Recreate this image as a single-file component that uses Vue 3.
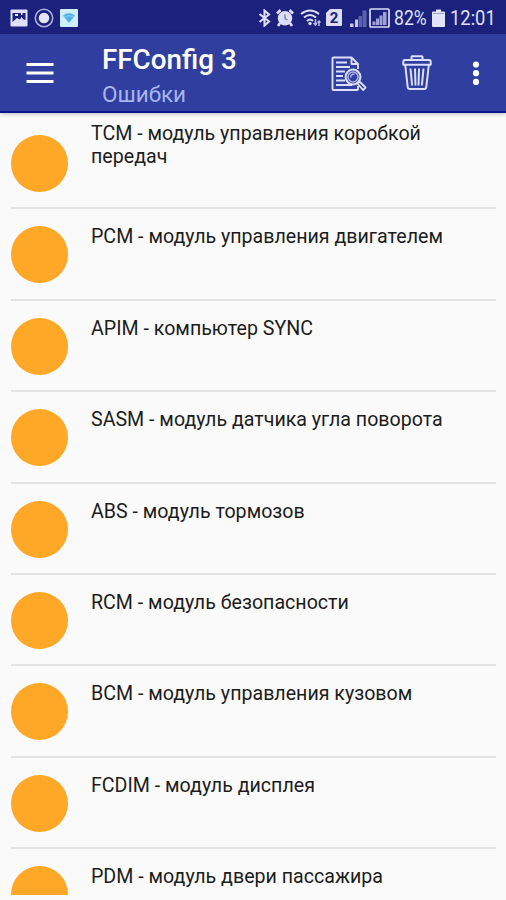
<script setup>
import { ref } from 'vue'

const modules = ref([
  { code: 'TCM', name: 'TCM - модуль управления коробкой передач' },
  { code: 'PCM', name: 'PCM - модуль управления двигателем' },
  { code: 'APIM', name: 'APIM - компьютер SYNC' },
  { code: 'SASM', name: 'SASM - модуль датчика угла поворота' },
  { code: 'ABS', name: 'ABS - модуль тормозов' },
  { code: 'RCM', name: 'RCM - модуль безопасности' },
  { code: 'BCM', name: 'BCM - модуль управления кузовом' },
  { code: 'FCDIM', name: 'FCDIM - модуль дисплея' },
  { code: 'PDM', name: 'PDM - модуль двери пассажира' },
])
</script>

<template>
  <div class="screen">
    <div class="status-bar">
      <div class="status-left">
        <svg width="18" height="18" viewBox="0 0 18 18">
          <rect x="0.5" y="0.5" width="17" height="17" rx="1" fill="#dfe1f7" />
          <path d="M2.500 4h13v7l-2-.5-2-2.500-1.500 2.500-3-1.500-4.500 4z" fill="#1b217c" />
          <path d="M5 5h3v2H5zM11 4h1.500v2H11z" fill="#dfe1f7" />
        </svg>
        <svg width="20" height="20" viewBox="0 0 20 20">
          <circle cx="10" cy="10" r="8.7" fill="none" stroke="#a9acdc" stroke-width="1.6" />
          <circle cx="10" cy="10" r="5.3" fill="#e4e6fb" />
        </svg>
        <svg width="18" height="18" viewBox="0 0 18 18">
          <rect width="18" height="18" rx="1" fill="#cdeefb" />
          <path d="M3 6.5Q9 1.5 15 6.5L9 14z" fill="#54b1e8" />
          <path d="M4.5 8Q9 5 13.5 8" fill="none" stroke="#8bcdf0" />
        </svg>
      </div>
      <div class="status-right">
        <svg width="13" height="18" viewBox="0 0 13 18">
          <path d="M1.500 5L11 12.500 6.500 16.500V1.500L11 5.500 1.500 13" fill="none" stroke="#dcdef6" stroke-width="2.100" />
        </svg>
        <svg class="alarm" width="18" height="18" viewBox="0 0 18 18">
          <circle cx="9" cy="9.3" r="7.2" fill="#dcdef6" />
          <path d="M1 4.500l3.500-3.500M17 4.500l-3.500-3.500M4 14l-2 3M14 14l2 3" stroke="#dcdef6" stroke-width="2.600" />
          <path d="M9 5.500v4l2.500 1.500" fill="none" stroke="#777bb9" stroke-width="1.400" />
        </svg>
        <svg class="wifi" width="22" height="18" viewBox="0 0 22 18">
          <g fill="none" stroke="#dcdef6" stroke-width="2.100">
            <path d="M1 5Q10-2 19 5" />
            <path d="M4 8.500Q10 3.500 16 8.500" />
            <path d="M7 12Q10 9 13 12" />
          </g>
          <circle cx="10" cy="14.500" r="1.700" fill="#dcdef6" />
          <path d="M15.500 10v6M13.500 14l2 2 1.500-2M19 17v-5M17.500 13.500l1.500-1.500 1.500 1.500" fill="none" stroke="#b9bce4" stroke-width="1.500" />
        </svg>
        <span class="sim">2</span>
        <svg class="signal" width="18" height="18" viewBox="0 0 18 18">
          <path d="M1 14.500h3.500V18H1zM6 10.500h3V18H6z" fill="#c4c7ea" />
          <path d="M9.500 7H13v11H9.500zM13.500 1.500H17.500V18h-4z" fill="#5d62ad" />
        </svg>
        <svg class="signal-boxed" width="21" height="20" viewBox="0 0 21 20">
          <rect x="1" y="1" width="19" height="18" rx="1" fill="none" stroke="#dcdef6" stroke-width="1.700" />
          <path d="M3.500 13.500h3V17h-3zM7 10.500h3V17H7zM10.500 7.500h3V17h-3zM14 4h3.500v13H14z" fill="#9da1d3" />
        </svg>
        <span class="percent">82%</span>
        <svg class="battery" width="13" height="18" viewBox="0 0 13 18">
          <path d="M4 0.500h5v2h3a1 1 0 0 1 1 1V17a1 1 0 0 1-1 1H1a1 1 0 0 1-1-1V3.500a1 1 0 0 1 1-1h3z" fill="#e1e3f9" />
          <path d="M1 4.500h11" stroke="#9da1cf" />
        </svg>
        <span class="clock">12:01</span>
      </div>
    </div>

    <header class="app-bar">
      <svg class="menu" width="28" height="22" viewBox="0 0 28 22" aria-label="Меню">
        <path d="M0.500 2.600h27M0.500 11h27M0.500 19.400h27" stroke="#fff" stroke-width="3" />
      </svg>
      <div class="titles">
        <h1>FFConfig 3</h1>
        <p>Ошибки</p>
      </div>
      <svg class="search" width="36" height="36" viewBox="0 0 36 36">
        <g fill="none" stroke="#dce0fb" stroke-width="1.900" stroke-linejoin="round">
          <path d="M27 13V8l-6.500-6.500h-18q-1 0-1 1V33q0 1 1 1H26q1 0 1-1v-3" />
          <path d="M20.500 2v6H27" />
          <path d="M5 6.500h11M5 11h14M5 15.500h9M5 20h7M5 24.500h9M5 29h16" />
          <circle cx="22" cy="21" r="7.400" fill="#303f9f" stroke-width="2" />
          <circle cx="22" cy="21" r="5" stroke="#a9b3e6" stroke-width="1.600" />
          <path d="M19.500 21.500q.5-3.500 4-3.500" stroke="#a9b3e6" stroke-width="1.500" />
          <path d="M26.500 27.500l2-2 6 6-2.500 2.500z" fill="#303f9f" stroke-width="1.800" />
        </g>
      </svg>
      <svg class="trash" width="30" height="36" viewBox="0 0 30 36">
        <g fill="none" stroke="#dce0fb" stroke-width="2" stroke-linejoin="round">
          <path d="M9.500 5V2q0-.8.800-.8h9.400q.8 0 .8.800v3" />
          <path d="M3 5h24q1.700 0 1.700 2v2.800H1.300V7q0-2 1.700-2z" />
          <path d="M3.200 10l2.500 22q.2 2 2 2h14.600q1.800 0 2-2l2.500-22" />
          <path d="M8.500 13.500l1.600 17M13 13.500l.5 17M17 13.500l-.5 17M21.500 13.500l-1.600 17" />
        </g>
      </svg>
      <svg class="more" width="8" height="26" viewBox="0 0 8 26">
        <g fill="#fff">
          <circle cx="4" cy="4.500" r="3.100" />
          <circle cx="4" cy="13.200" r="3.100" />
          <circle cx="4" cy="21.900" r="3.100" />
        </g>
      </svg>
    </header>

    <main class="content">
      <ul class="list">
        <li v-for="item in modules" :key="item.code" class="row">
          <span class="dot"></span>
          <span class="name">{{ item.name }}</span>
        </li>
      </ul>
    </main>
  </div>
</template>

<style>
body {
  margin: 0;
  background: #fafafa;
}
</style>

<style scoped>
.screen {
  width: 506px;
  height: 900px;
  display: flex;
  flex-direction: column;
  overflow: hidden;
  background: #fafafa;
  font-family: Roboto, 'Liberation Sans', sans-serif;
}

svg {
  display: block;
  flex: none;
}

.status-bar {
  flex: none;
  height: 34px;
  box-sizing: border-box;
  padding: 1px 11px 0 10px;
  display: flex;
  align-items: center;
  justify-content: space-between;
  background: #1b217c;
  color: #dfe1f7;
}

.status-left,
.status-right {
  display: flex;
  align-items: center;
}

.status-left {
  gap: 6px;
}

.alarm {
  margin-left: 5px;
}

.wifi {
  margin-left: 6px;
}

.sim {
  width: 16px;
  height: 17px;
  margin-left: 4px;
  border-radius: 1px;
  background: #dcdef6;
  clip-path: polygon(4px 0, 100% 0, 100% 100%, 0 100%, 0 4px);
  color: #1b217c;
  font-size: 15px;
  font-weight: 700;
  line-height: 18px;
  text-align: center;
}

.signal {
  margin-left: 7px;
}

.signal-boxed {
  margin-left: 2px;
}

.percent {
  width: 34px;
  margin-left: 4px;
  font-size: 21px;
  white-space: nowrap;
  transform: scaleX(0.84);
  transform-origin: left;
}

.battery {
  margin-left: 4px;
}

.clock {
  width: 45px;
  margin-left: 5px;
  font-size: 21px;
  white-space: nowrap;
  transform: scaleX(0.875);
  transform-origin: left;
}

.app-bar {
  position: relative;
  z-index: 1;
  flex: none;
  height: 79px;
  box-sizing: border-box;
  padding-left: 26px;
  display: flex;
  align-items: center;
  background: #303f9f;
  border-bottom: 2px solid #0c1590;
  box-shadow: 0 1px 4px rgba(0, 0, 0, 0.25);
}

.titles {
  width: 229px;
  margin-left: 48px;
  padding-top: 8px;
}

h1 {
  margin: 0;
  color: #fff;
  font-size: 27.8px;
  font-weight: 500;
  line-height: 32px;
}

p {
  margin: 3px 0 0;
  color: #a9b5ed;
  font-size: 22.5px;
  line-height: 30px;
}

.search {
  margin-top: 2px;
}

.trash {
  margin-left: 35px;
}

.more {
  margin-left: 40px;
}

.content {
  flex: none;
  height: 782px;
  overflow: hidden;
}

.list {
  margin: 0;
  padding: 5px 10px 0 11px;
  list-style: none;
}

.row {
  height: 91.4px;
  box-sizing: border-box;
  display: flex;
  border-bottom: 2px solid #e3e3e3;
}

.dot {
  flex: none;
  width: 57px;
  height: 57px;
  margin-top: 17px;
  border-radius: 50%;
  background: #ffa726;
}

.name {
  margin: 16px 0 0 23px;
  width: 370px;
  color: #1c1c1c;
  font-size: 19.62px;
  line-height: 23px;
}

.row:first-child .name {
  margin-top: 4px;
}
</style>
